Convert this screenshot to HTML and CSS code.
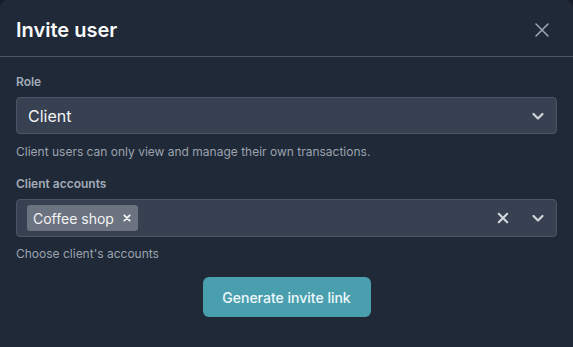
FILE: index.html
```html
<!DOCTYPE html>
<html lang="en">
<head>
<meta charset="utf-8">
<title>Invite user</title>
<link rel="stylesheet" href="styles.css">
</head>
<body>
<div class="modal">
  <header class="modal-header">
    <h1 class="modal-title">Invite user</h1>
    <button class="close-btn" aria-label="Close">
      <svg width="24" height="24" viewBox="0 0 24 24" fill="none" stroke="currentColor" stroke-width="1.6" stroke-linecap="round"><path d="M18 6 6 18M6 6l12 12"/></svg>
    </button>
  </header>
  <div class="modal-body">
    <div class="field">
      <label class="field-label">Role</label>
      <div class="select">
        <span class="select-value">Client</span>
        <span class="indicator chevron">
          <svg width="14" height="14" viewBox="0 0 14 14" fill="none" stroke="currentColor" stroke-width="2.2" stroke-linecap="round" stroke-linejoin="round"><path d="M2.5 5 7 9.5 11.5 5"/></svg>
        </span>
      </div>
      <p class="help">Client users can only view and manage their own transactions.</p>
    </div>
    <div class="field last">
      <label class="field-label">Client accounts</label>
      <div class="select multi">
        <div class="tags">
          <span class="tag">Coffee shop
            <svg width="8" height="8" viewBox="0 0 8 8" fill="none" stroke="currentColor" stroke-width="1.8" stroke-linecap="round"><path d="M1.3 1.3 6.7 6.7M6.7 1.3 1.3 6.7"/></svg>
          </span>
        </div>
        <span class="indicator clear">
          <svg width="12" height="12" viewBox="0 0 12 12" fill="none" stroke="currentColor" stroke-width="2.2" stroke-linecap="round"><path d="M1.8 1.8 10.2 10.2M10.2 1.8 1.8 10.2"/></svg>
        </span>
        <span class="indicator chevron">
          <svg width="14" height="14" viewBox="0 0 14 14" fill="none" stroke="currentColor" stroke-width="2.2" stroke-linecap="round" stroke-linejoin="round"><path d="M2.5 5 7 9.5 11.5 5"/></svg>
        </span>
      </div>
      <p class="help help-tight">Choose client's accounts</p>
    </div>
    <div class="actions">
      <button class="primary-btn">Generate invite link</button>
    </div>
  </div>
</div>
</body>
</html>
```

FILE: styles.css
```css
html, body {
  margin: 0;
  padding: 0;
  height: 100%;
  background: #161d28;
}
body {
  font-family: Inter, "Noto Sans", sans-serif;
  color: #f3f4f6;
}
.modal {
  background: #1f2937;
  border-radius: 8px 8px 0 0;
  min-height: 100%;
  box-sizing: border-box;
}
.modal-header {
  display: flex;
  align-items: center;
  justify-content: space-between;
  padding: 16px 16px 12px 16px;
  border-bottom: 1px solid #4b5563;
}
.modal-title {
  margin: 0;
  font-size: 20px;
  line-height: 28px;
  font-weight: 600;
  color: #f9fafb;
}
.close-btn {
  display: flex;
  padding: 0;
  margin-right: 3px;
  border: 0;
  background: none;
  color: #9ca3af;
}
.modal-body {
  padding: 17px 16px 16px 16px;
}
.field {
  display: flex;
  flex-direction: column;
  margin-bottom: 16px;
}
.field.last {
  margin-bottom: 15px;
}
.field-label {
  font-size: 12px;
  line-height: 16px;
  font-weight: 600;
  color: #a3acb9;
  margin-bottom: 7px;
}
.select {
  display: flex;
  align-items: center;
  height: 37px;
  box-sizing: border-box;
  background: #374151;
  border: 1px solid #4b5563;
  border-radius: 4px;
  padding: 0 11px 0 11px;
}
.select.multi {
  height: 38px;
  padding-left: 10px;
}
.select-value {
  flex: 1;
  font-size: 16px;
  line-height: 24px;
  color: #f3f4f6;
}
.tags {
  flex: 1;
  display: flex;
}
.tag {
  display: flex;
  align-items: center;
  gap: 9px;
  height: 26px;
  padding: 0 7px 0 6px;
  background: #6b7280;
  border-radius: 3px;
  font-size: 14px;
  color: #f3f4f6;
}
.indicator {
  display: flex;
  color: #d1d5db;
}
.clear {
  margin-right: 22px;
}
.help {
  margin: 10px 0 0 0;
  font-size: 12px;
  line-height: 16px;
  color: #9ca3af;
}
.help.help-tight {
  margin-top: 9px;
}
.actions {
  display: flex;
  justify-content: center;
}
.primary-btn {
  width: 168px;
  height: 40px;
  border: 0;
  border-radius: 6px;
  background: #4a9fae;
  color: #eef8fa;
  font-family: Inter, "Noto Sans", sans-serif;
  font-size: 14px;
  font-weight: 500;
}
```
